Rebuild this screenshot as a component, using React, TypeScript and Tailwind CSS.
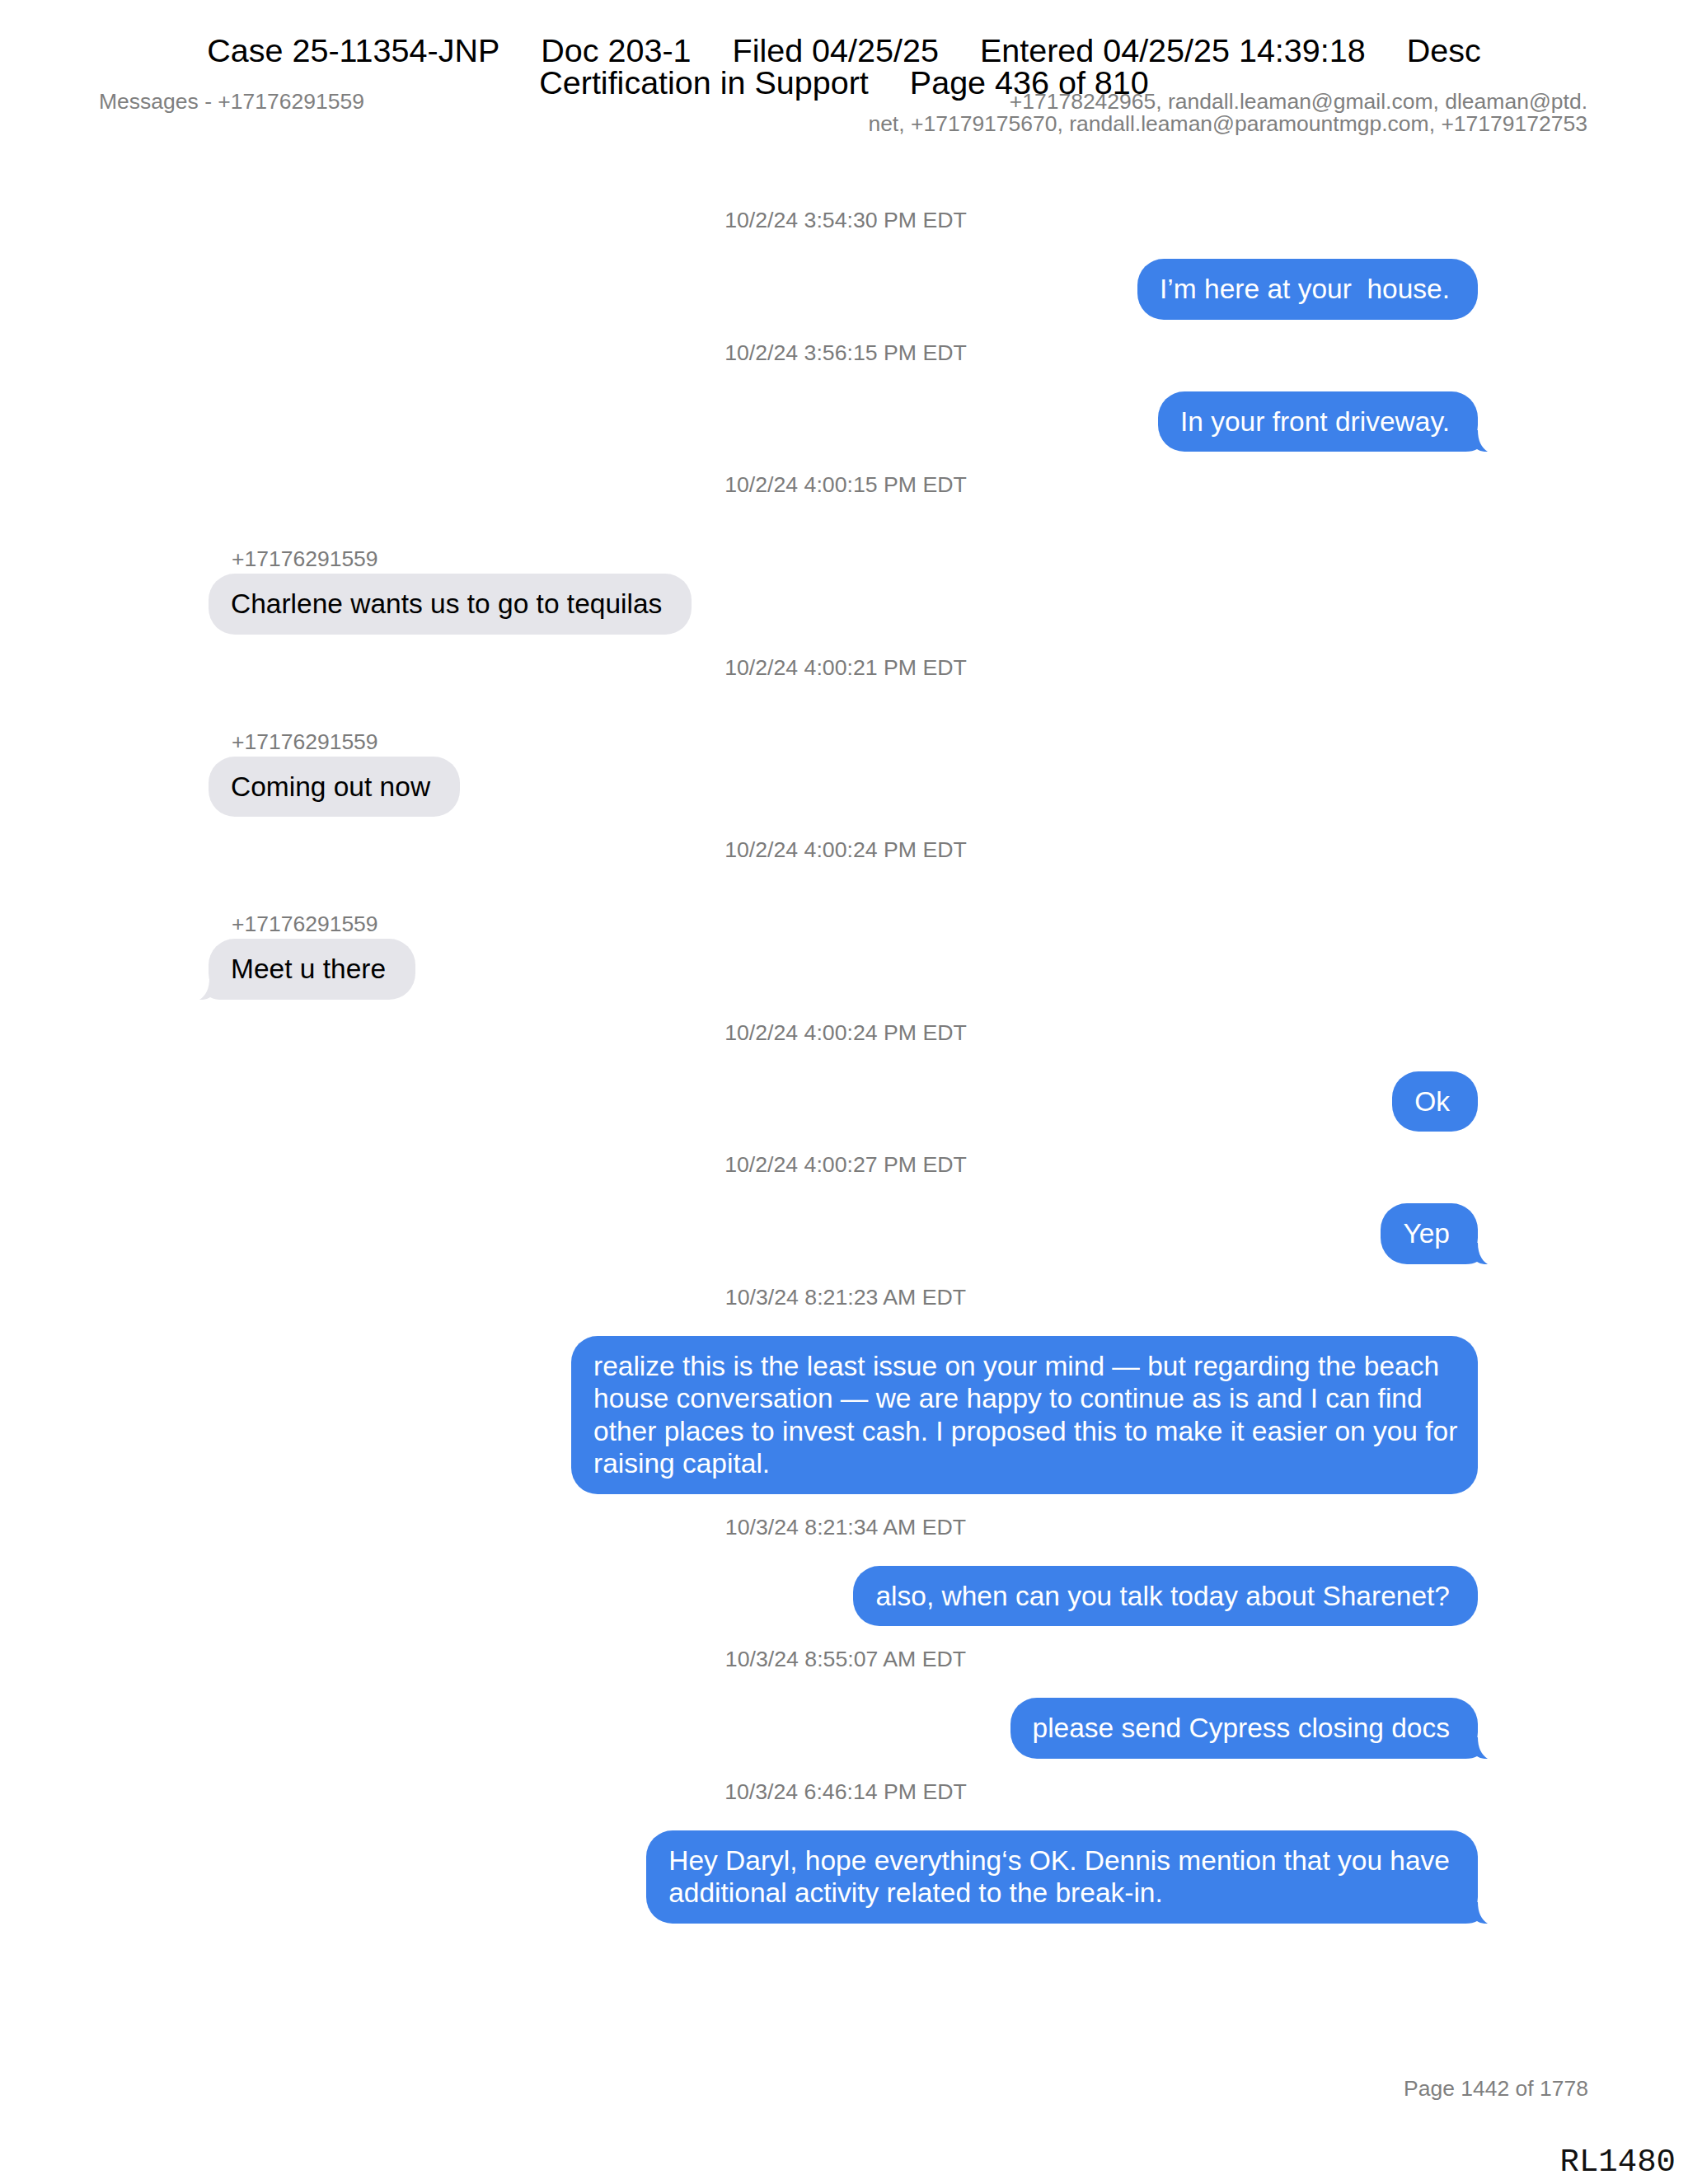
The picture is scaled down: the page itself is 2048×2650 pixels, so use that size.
import React from "react";

type Msg = {
  time: string;
  from?: string;
  lines: string[];
  tail?: boolean;
  wide?: boolean;
};

const BLUE = "#3d81ea";
const GRAY = "#e5e5ea";

const messages: Msg[] = [
  { time: "10/2/24 3:54:30 PM EDT", lines: ["I’m here at your  house."] },
  { time: "10/2/24 3:56:15 PM EDT", lines: ["In your front driveway."], tail: true },
  { time: "10/2/24 4:00:15 PM EDT", from: "+17176291559", lines: ["Charlene wants us to go to tequilas"] },
  { time: "10/2/24 4:00:21 PM EDT", from: "+17176291559", lines: ["Coming out now"] },
  { time: "10/2/24 4:00:24 PM EDT", from: "+17176291559", lines: ["Meet u there"], tail: true },
  { time: "10/2/24 4:00:24 PM EDT", lines: ["Ok"] },
  { time: "10/2/24 4:00:27 PM EDT", lines: ["Yep"], tail: true },
  {
    time: "10/3/24 8:21:23 AM EDT",
    wide: true,
    lines: [
      "realize this is the least issue on your mind — but regarding the beach",
      "house conversation — we are happy to continue as is and I can find",
      "other places to invest cash. I proposed this to make it easier on you for",
      "raising capital.",
    ],
  },
  { time: "10/3/24 8:21:34 AM EDT", lines: ["also, when can you talk today about Sharenet?"] },
  { time: "10/3/24 8:55:07 AM EDT", lines: ["please send Cypress closing docs"], tail: true },
  {
    time: "10/3/24 6:46:14 PM EDT",
    tail: true,
    lines: [
      "Hey Daryl, hope everything‘s OK. Dennis mention that you have",
      "additional activity related to the break-in.",
    ],
  },
];

function Tail({ color, left }: { color: string; left?: boolean }) {
  // little hook at the bottom corner of the last bubble in a run
  return (
    <svg
      viewBox="0 0 44 26"
      className={
        left
          ? "absolute bottom-0 -left-[11px] w-[44px] h-[26px]"
          : "absolute bottom-0 -right-[12px] w-[44px] h-[26px]"
      }
    >
      <g transform={left ? "translate(44 0) scale(-1 1)" : undefined}>
        <path
          d="M0 0H32C32 12 36 21 44 26C39 26.5 34 25 31 23C27 25.5 22 26 14 26H0Z"
          fill={color}
        />
      </g>
    </svg>
  );
}

function Bubble({ msg }: { msg: Msg }) {
  const mine = !msg.from;
  return (
    <div
      className={
        mine
          ? msg.wide
            ? "relative self-end mt-[32px] w-[1100px] rounded-[32px] pl-[27px] pr-[27px] py-[17px] bg-[#3d81ea] text-white text-[33.5px] leading-[39.5px] whitespace-pre"
            : "relative self-end mt-[32px] rounded-[32px] pl-[27px] pr-[34px] py-[17px] bg-[#3d81ea] text-white text-[33.5px] leading-[39.5px] whitespace-pre"
          : "relative self-start mt-[3px] rounded-[32px] pl-[27px] pr-[36px] py-[17px] bg-[#e5e5ea] text-black text-[33.5px] leading-[39.5px] whitespace-pre"
      }
    >
      {msg.tail && <Tail color={mine ? BLUE : GRAY} left={!mine} />}
      <div className="relative">
        {msg.lines.map((l, i) => (
          <div key={i}>{l}</div>
        ))}
      </div>
    </div>
  );
}

export default function App() {
  return (
    <div className="relative w-[2048px] min-h-[2650px] bg-white font-['Liberation_Sans',Arial,sans-serif]">
      {/* court filing stamp over the page */}
      <div className="absolute inset-x-0 top-[42px] flex flex-col items-center text-[39.5px] leading-[39px] text-black whitespace-nowrap">
        <div className="flex gap-[50px]">
          <span>Case 25-11354-JNP</span>
          <span>Doc 203-1</span>
          <span>Filed 04/25/25</span>
          <span>Entered 04/25/25 14:39:18</span>
          <span>Desc</span>
        </div>
        <div className="flex gap-[50px]">
          <span>Certification in Support</span>
          <span>Page 436 of 810</span>
        </div>
      </div>

      {/* page header */}
      <div className="flex justify-between pt-[110px] pl-[120px] pr-[122px] text-[26.5px] leading-[27px] text-[#7f7f7f]">
        <div>Messages - +17176291559</div>
        <div className="text-right">
          +17178242965, randall.leaman@gmail.com, dleaman@ptd.
          <br />
          net, +17179175670, randall.leaman@paramountmgp.com, +17179172753
        </div>
      </div>

      {/* conversation */}
      <div className="mt-[88px] flex flex-col pl-[253px] pr-[255px]">
        {messages.map((m, i) => (
          <div key={i} className={i === 0 ? "flex flex-col" : "mt-[25px] flex flex-col"}>
            <div className="pl-[6px] text-center text-[26.7px] leading-[30px] text-[#7b7b7b]">{m.time}</div>
            {m.from && (
              <div className="mt-[60px] pl-[28px] text-[26.5px] leading-[30px] text-[#7b7b7b]">{m.from}</div>
            )}
            <Bubble msg={m} />
          </div>
        ))}
      </div>

      {/* footer */}
      <div className="mt-[185px] pr-[121px] text-right text-[26.5px] leading-[30px] text-[#7f7f7f]">
        Page 1442 of 1778
      </div>
      <div className="mt-[56px] pr-[15px] text-right font-['Liberation_Mono',monospace] text-[39px] leading-[39px] text-[#111]">
        RL1480
      </div>
    </div>
  );
}
